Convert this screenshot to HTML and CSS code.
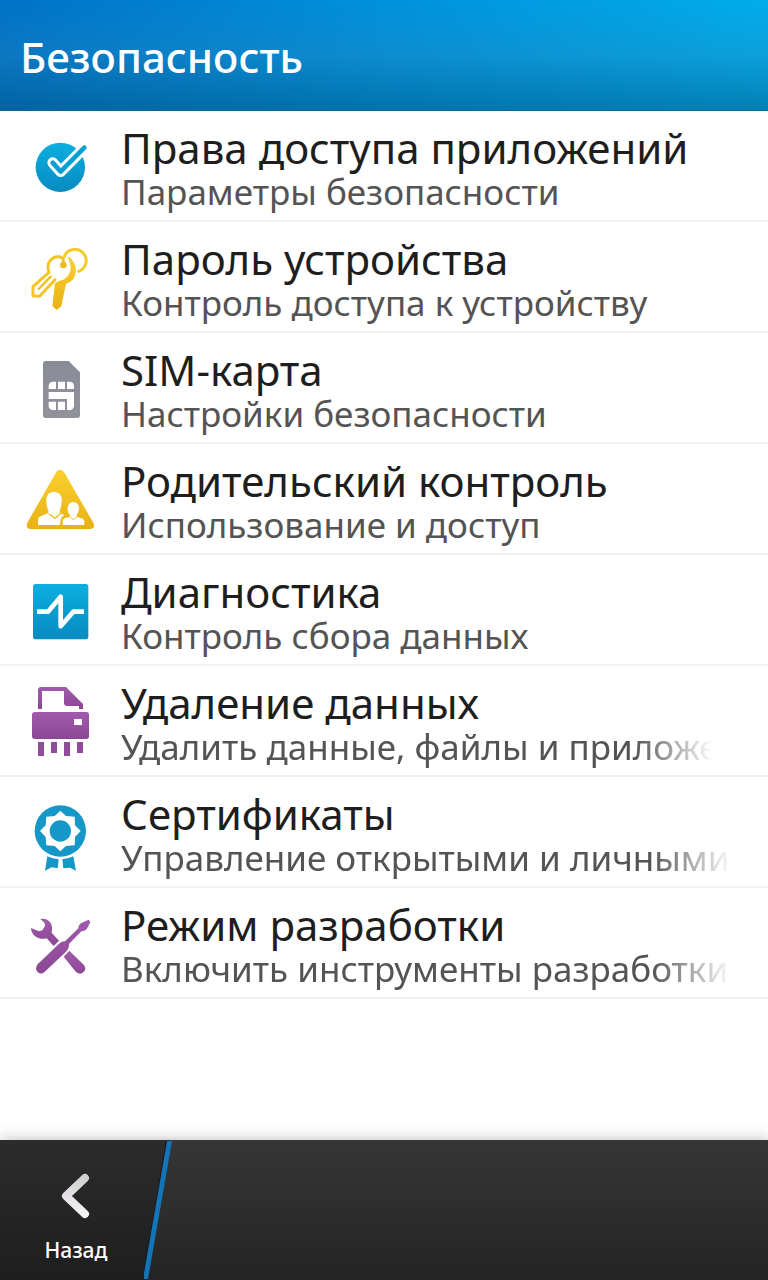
FILE: index.html
```html
<!DOCTYPE html>
<html lang="ru">
<head>
    <meta charset="UTF-8" />
    <meta name="viewport" content="width=device-width, initial-scale=1.0" />
    <title>Безопасность</title>
    <link rel="stylesheet" href="styles.css">
</head>
<body>
    <!-- Градиенты для иконок -->
    <svg class="defs" aria-hidden="true">
        <defs>
            <linearGradient id="blue" x1="0" y1="0" x2="0" y2="1">
                <stop offset="0" stop-color="#0caee0" />
                <stop offset="1" stop-color="#078bc0" />
            </linearGradient>
            <linearGradient id="yellow" x1="0" y1="0" x2="0" y2="1">
                <stop offset="0" stop-color="#fad02c" />
                <stop offset="1" stop-color="#e9b117" />
            </linearGradient>
            <linearGradient id="gray" x1="0" y1="0" x2="0" y2="1">
                <stop offset="0" stop-color="#898b98" />
                <stop offset="1" stop-color="#92929a" />
            </linearGradient>
            <linearGradient id="purple" x1="0" y1="0" x2="0" y2="1">
                <stop offset="0" stop-color="#a15bac" />
                <stop offset="1" stop-color="#8b4794" />
            </linearGradient>
            <linearGradient id="silver" x1="0" y1="0" x2="0" y2="1">
                <stop offset="0" stop-color="#d2d0d2" />
                <stop offset="1" stop-color="#f5f3f5" />
            </linearGradient>
            <linearGradient id="dark" x1="0" y1="0" x2="0" y2="1">
                <stop offset="0" stop-color="#2c2c2c" />
                <stop offset="1" stop-color="#1e1e1e" />
            </linearGradient>
        </defs>
    </svg>

    <header class="header">
        <h1>Безопасность</h1>
    </header>

    <main class="content">
        <ul class="settings">
            <li>
                <a href="#permissions" class="item">
                    <svg class="icon" viewBox="0 3 270 270" aria-hidden="true">
                        <circle cx="121" cy="142" r="74" fill="url(#blue)" />
                        <path d="M193 83L122 155L98 128" fill="none" stroke="#fff" stroke-width="32" stroke-linecap="round" stroke-linejoin="round" />
                        <path d="M193 83L122 155L98 128" fill="none" stroke="#0a9fd2" stroke-width="14" stroke-linecap="round" stroke-linejoin="round" />
                    </svg>
                    <div class="text">
                        <span class="title">Права доступа приложений</span>
                        <span class="subtitle">Параметры безопасности</span>
                    </div>
                </a>
            </li>
            <li>
                <a href="#password" class="item">
                    <svg class="icon" viewBox="0 -9 270 270" aria-hidden="true">
                        <path d="M132 67A34 34 0 1 1 176 109" fill="none" stroke="#f5ca2b" stroke-width="9" stroke-linecap="round" />
                        <path d="M87 112C77 86 93 64 117 65M87 112L39 155L39 183L59 184L105 134" fill="none" stroke="#f3c526" stroke-width="9" stroke-linejoin="round" stroke-linecap="round" />
                        <path d="M56 162L92 125" stroke="#efbf20" stroke-width="7" stroke-linecap="round" />
                        <path d="M147 65C166 80 174 104 162 128C158 137 148 143 138 146L124 214L110 225L97 213L105 145L117 138C147 132 163 102 143 68Z" fill="url(#yellow)" />
                        <path d="M117 65Q133 68 130 86" fill="none" stroke="#f3c526" stroke-width="8" />
                        <circle cx="130" cy="90" r="10" fill="#edbb1b" />
                    </svg>
                    <div class="text">
                        <span class="title">Пароль устройства</span>
                        <span class="subtitle">Контроль доступа к устройству</span>
                    </div>
                </a>
            </li>
            <li>
                <a href="#sim" class="item">
                    <svg class="icon" viewBox="0 -6 270 270" aria-hidden="true">
                        <path d="M77 48H146L180 82V211Q180 219 172 219H77Q69 219 69 211V56Q69 48 77 48Z" fill="url(#gray)" />
                        <path d="M98 110H108V132H86V122Q87 111 98 110ZM114 110H135V132H114ZM141 110H150Q161 111 162 122V132H141ZM86 141H162V182Q161 194 150 195H141V162H86ZM86 170H108V195H98Q87 194 86 184ZM114 170H135V195H114Z" fill="#fff" />
                    </svg>
                    <div class="text">
                        <span class="title">SIM-карта</span>
                        <span class="subtitle">Настройки безопасности</span>
                    </div>
                </a>
            </li>
            <li>
                <a href="#parental" class="item">
                    <svg class="icon" viewBox="0 -3 270 270" aria-hidden="true">
                        <path d="M109 51Q120 38 132 51L220 203Q228 221 210 222H32Q16 220 22 203Z" fill="url(#yellow)" />
                        <path d="M54 210V194Q54 187 62 184L85 174V166Q79 156 79 138Q78 112 102 110Q127 112 125 138Q125 156 119 166V174L133 180Q124 185 122 194L120 210Z" fill="#fff" />
                        <path d="M86 176L105 190L122 175" fill="none" stroke="#f0bc22" stroke-width="4" />
                        <path d="M128 210V198Q128 192 134 190L150 185V180Q142 173 143 160Q144 142 160 141Q176 142 177 160Q177 173 170 180V185L188 191Q193 193 193 199V210Z" fill="#fff" />
                        <path d="M150 186L160 194L170 186" fill="none" stroke="#efb91f" stroke-width="3" />
                    </svg>
                    <div class="text">
                        <span class="title">Родительский контроль</span>
                        <span class="subtitle">Использование и доступ</span>
                    </div>
                </a>
            </li>
            <li>
                <a href="#diagnostics" class="item">
                    <svg class="icon" viewBox="0 -15 270 270" aria-hidden="true">
                        <rect x="39" y="42" width="166" height="166" rx="8" fill="url(#blue)" />
                        <path d="M51 125H84L122 80V169L160 125H192" fill="none" stroke="#fff" stroke-width="14" stroke-linejoin="round" />
                    </svg>
                    <div class="text">
                        <span class="title">Диагностика</span>
                        <span class="subtitle">Контроль сбора данных</span>
                    </div>
                </a>
            </li>
            <li>
                <a href="#wipe" class="item">
                    <svg class="icon" viewBox="0 3 270 270" aria-hidden="true">
                        <path d="M54 102V45Q54 36 63 36H138L189 87V102H177V93H141Q132 92 132 84V48H66V102Z" fill="url(#purple)" />
                        <path d="M45 111H199Q207 111 207 119V184Q207 192 199 192H45Q36 192 36 184V119Q36 111 45 111ZM162 132V150H186V132Z" fill="url(#purple)" fill-rule="evenodd" />
                        <path d="M54 201H72V243H54ZM93 201H111V234H93ZM132 201H150V243H132ZM171 201H189V234H171Z" fill="#904b9a" />
                    </svg>
                    <div class="text">
                        <span class="title">Удаление данных</span>
                        <span class="subtitle fade fade-short">Удалить данные, файлы и приложения</span>
                    </div>
                </a>
            </li>
            <li>
                <a href="#certificates" class="item">
                    <svg class="icon" viewBox="0 -18 270 270" aria-hidden="true">
                        <circle cx="121" cy="114" r="77" fill="#1598c8" />
                        <path d="M121 53L138 69L164 71L165 97L182 114L165 132L164 157L138 159L121 175L104 159L79 157L77 132L60 114L77 97L79 71L104 69Z" fill="#fff" />
                        <circle cx="121" cy="114" r="32" fill="#1598c8" />
                        <path d="M82 190Q98 198 116 199L113 226L95 223L75 233ZM127 199Q145 198 160 190L168 233L150 224L130 226Z" fill="#1598c8" />
                    </svg>
                    <div class="text">
                        <span class="title">Сертификаты</span>
                        <span class="subtitle fade">Управление открытыми и личными</span>
                    </div>
                </a>
            </li>
            <li>
                <a href="#development" class="item">
                    <svg class="icon" viewBox="0 -6 270 270" aria-hidden="true">
                        <path d="M61 57C79 52 99 66 96 89L95 98L117 122L101 138L80 115C59 121 34 109 33 84L53 92Q62 95 67 90L74 80Q77 73 73 68Z" fill="url(#purple)" />
                        <path d="M148 152L191 194Q201 207 190 217Q180 226 168 216L131 170Z" fill="url(#purple)" />
                        <path d="M206 59L211 66L202 84Q196 94 184 94L147 132Q148 146 138 155L76 214Q64 226 53 216Q43 206 53 193L117 131Q125 124 135 124L175 85Q175 74 184 69Z" fill="url(#purple)" />
                    </svg>
                    <div class="text">
                        <span class="title">Режим разработки</span>
                        <span class="subtitle fade">Включить инструменты разработки</span>
                    </div>
                </a>
            </li>
        </ul>
    </main>

    <footer class="action-bar">
        <button type="button" class="back">
            <svg class="back-icon" viewBox="0 0 36 48" aria-hidden="true">
                <path d="M27 6L8 24L27 42" fill="none" stroke="url(#silver)" stroke-width="8" stroke-linecap="round" stroke-linejoin="round" />
            </svg>
            <span>Назад</span>
        </button>
        <svg class="divider" viewBox="0 0 28 140" aria-hidden="true">
            <path d="M0 0H26L2 140H0Z" fill="url(#dark)" />
            <path d="M22 1H27L3 139H0V130Z" fill="#12161a" />
            <path d="M23 1H28L4 139H-1Z" fill="#1474b8" />
        </svg>
    </footer>
</body>
</html>
```

FILE: styles.css
```css
:root {
    --title-color: #1e1e1e;
    --subtitle-color: #545454;
    --line-color: #f1f1f1;
}

* {
    box-sizing: border-box;
}

body {
    margin: 0;
    min-height: 100vh;
    display: flex;
    flex-direction: column;
    background: #fff;
    font-family: "Noto Sans", "Open Sans", sans-serif;
}

.defs {
    position: absolute;
    width: 0;
    height: 0;
}

.header {
    height: 111px;
    padding: 4px 20px 0;
    display: flex;
    align-items: center;
    background:
        linear-gradient(to bottom, rgba(20, 120, 180, 0) 0%, rgba(40, 130, 180, 0.3) 50%, rgba(0, 85, 125, 0.5) 100%),
        linear-gradient(to right, #0072c8 0%, #0091dc 50%, #00adec 100%);
    border-bottom: 1px solid #12648e;
}

.header h1 {
    margin: 0;
    color: #fff;
    font-size: 42px;
    font-weight: 500;
    line-height: 56px;
}

.content {
    flex: 1;
}

.settings {
    list-style: none;
    margin: 0;
    padding: 0;
}

.item {
    display: flex;
    align-items: center;
    gap: 11px;
    height: 111px;
    padding-left: 20px;
    border-bottom: 2px solid var(--line-color);
    text-decoration: none;
}

.icon {
    flex: none;
    width: 90px;
    height: 90px;
}

.text {
    flex: 1;
    min-width: 0;
    padding-top: 12px;
}

.title,
.subtitle {
    display: block;
    white-space: nowrap;
}

.title {
    color: var(--title-color);
    font-size: 42px;
    line-height: 48px;
}

.subtitle {
    padding-bottom: 8px;
    color: var(--subtitle-color);
    font-size: 35px;
    line-height: 40px;
}

/* длинный текст плавно исчезает справа */
.fade {
    margin-right: 36px;
    overflow: hidden;
    -webkit-mask-image: linear-gradient(to left, transparent 0, #000 80px);
    mask-image: linear-gradient(to left, transparent 0, #000 80px);
}

.fade-short {
    margin-right: 54px;
}

.action-bar {
    display: flex;
    height: 140px;
    background: linear-gradient(to bottom, #363636, #242424);
    box-shadow: 0 0 14px rgba(60, 45, 70, 0.35);
}

.back {
    width: 144px;
    padding: 32px 0 0 8px;
    display: flex;
    flex-direction: column;
    align-items: center;
    gap: 16px;
    border: none;
    background: linear-gradient(to bottom, #2c2c2c, #1e1e1e);
    color: #fff;
    font-family: inherit;
    font-size: 21px;
    font-weight: 500;
    line-height: 28px;
    cursor: pointer;
}

.back-icon {
    width: 36px;
    height: 48px;
}

.divider {
    width: 28px;
    height: 140px;
}
```
